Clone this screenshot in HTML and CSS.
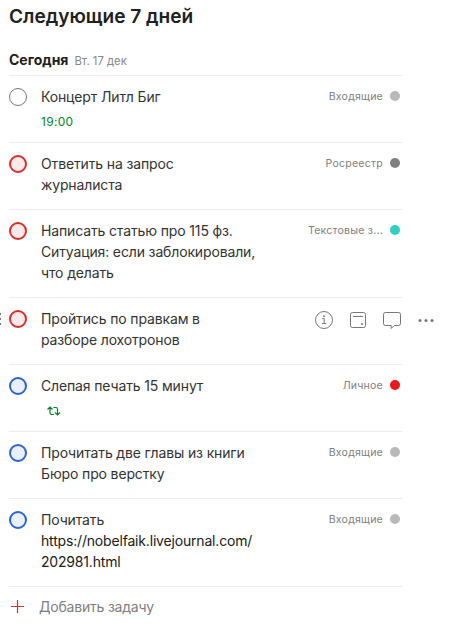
FILE: index.html
```html
<!DOCTYPE html>
<html lang="ru">
	<head>
		<meta charset="UTF-8">
		<title>Следующие 7 дней</title>
		<link rel="stylesheet" href="styles.css">
	</head>
	<body>
		<div class="agenda">
			<h1>Следующие 7 дней</h1>
			<div class="day">
				<h2>Сегодня</h2>
				<span class="date">Вт. 17 дек</span>
			</div>
			<ul class="tasks">
				<li>
					<span class="check"></span>
					<div class="text">
						<p>Концерт Литл Биг</p>
						<div class="time">19:00</div>
					</div>
					<div class="project">Входящие<i class="dot"></i></div>
				</li>
				<li>
					<span class="check red"></span>
					<div class="text">
						<p>Ответить на запрос<br>журналиста</p>
					</div>
					<div class="project">Росреестр<i class="dot dark"></i></div>
				</li>
				<li>
					<span class="check red"></span>
					<div class="text">
						<p>Написать статью про 115 фз.<br>Ситуация: если заблокировали,<br>что делать</p>
					</div>
					<div class="project">Текстовые з...<i class="dot teal"></i></div>
				</li>
				<li class="hovered">
					<svg class="drag" width="3" height="14" viewBox="0 0 3 14">
						<path d="M0 2h2M0 7h2M0 12h2" stroke="#777" stroke-width="2"/>
					</svg>
					<span class="check red"></span>
					<div class="text">
						<p>Пройтись по правкам в<br>разборе лохотронов</p>
					</div>
					<div class="actions">
						<svg width="18" height="18" viewBox="0 0 18 18">
							<circle cx="9" cy="9" r="8.5"/>
							<path d="M7.2 7.5h2v5M7 12.5h4.3"/>
							<circle class="fill" cx="9" cy="5.2" r=".9"/>
						</svg>
						<svg width="16" height="18" viewBox="0 0 16 18">
							<rect x=".5" y="1.5" width="15" height="15" rx="2"/>
							<path d="M3 5.5h10"/>
							<circle class="fill" cx="12" cy="13" r="1"/>
						</svg>
						<svg width="18" height="18" viewBox="0 0 18 18">
							<path d="M2.5 1.5h13a2 2 0 0 1 2 2v9a2 2 0 0 1-2 2h-4.300l-3 3v-3H2.500a2 2 0 0 1-2-2v-9a2 2 0 0 1 2-2z"/>
						</svg>
						<svg width="16" height="18" viewBox="0 0 16 18">
							<circle class="fill" cx="2" cy="9.500" r="1.500"/>
							<circle class="fill" cx="8" cy="9.500" r="1.500"/>
							<circle class="fill" cx="14" cy="9.500" r="1.500"/>
						</svg>
					</div>
				</li>
				<li>
					<span class="check blue"></span>
					<div class="text">
						<p>Слепая печать 15 минут</p>
						<svg class="repeat" width="14" height="10" viewBox="0 0 14 10">
							<path d="M.5 3.500L3 1l2.500 2.500M3 1.500v5.500a1.500 1.500 0 0 0 1.500 1.500H7M6.500 1.500h2.500A1.500 1.500 0 0 1 10.500 3v5.500M8 6.500L10.500 9l2.500-2.500"/>
						</svg>
					</div>
					<div class="project">Личное<i class="dot bright"></i></div>
				</li>
				<li>
					<span class="check blue"></span>
					<div class="text">
						<p>Прочитать две главы из книги<br>Бюро про верстку</p>
					</div>
					<div class="project">Входящие<i class="dot"></i></div>
				</li>
				<li>
					<span class="check blue"></span>
					<div class="text">
						<p>Почитать<br><a>https://nobelfaik.livejournal.com/<br>202981.html</a></p>
					</div>
					<div class="project">Входящие<i class="dot"></i></div>
				</li>
			</ul>
			<div class="add">
				<svg width="13" height="13" viewBox="0 0 13 13">
					<path d="M6.500 0v13M0 6.500h13" stroke="#c0392b" stroke-width="1.2"/>
				</svg>
				<span>Добавить задачу</span>
			</div>
		</div>
	</body>
</html>
```
FILE: styles.css
```css
*{
	padding: 0;
	margin: 0;
	box-sizing: border-box;
}
body{
	background-color: #fff;
	color: #333;
	font-family: Inter, "Liberation Sans", sans-serif;
	font-size: 14px;
	line-height: 21px;
}
li{
	list-style: none;
}
svg{
	display: block;
	fill: none;
}
.agenda{
	width: 393px;
	margin-left: 9px;
	padding-top: 4px;
}
h1{
	font-size: 19.1px;
	line-height: 24px;
	font-weight: 600;
	color: #202020;
}
.day{
	display: flex;
	align-items: baseline;
	gap: 6px;
	height: 26px;
	margin-top: 21px;
	white-space: nowrap;
}
h2{
	font-size: 14px;
	font-weight: 700;
	color: #202020;
}
.date{
	font-size: 11.3px;
	color: #888;
}
.tasks>li{
	position: relative;
	display: flex;
	align-items: flex-start;
	min-height: 67px;
	padding: 10px 0 9px;
	border-top: 1px solid #ececec;
}
.tasks>li:last-child{
	border-bottom: 1px solid #ececec;
}
.check{
	width: 18px;
	height: 18px;
	margin: 2px 14px 0 0;
	border: 1px solid #777;
	border-radius: 50%;
}
.check.red{
	border: 2px solid #d8302b;
	background-color: #fce9ea;
}
.check.blue{
	border: 2px solid #2c64d2;
	background-color: #e9effb;
}
.text{
	flex: 1;
	white-space: nowrap;
	letter-spacing: -.14px;
}
.text>p:only-child{
	padding-bottom: 5px;
}
.text a{
	letter-spacing: -.18px;
	color: #202020;
}
.time{
	margin-top: 4px;
	font-size: 12px;
	letter-spacing: .3px;
	color: #058527;
}
.repeat{
	margin: 10px 0 0 6px;
	stroke: #058527;
	stroke-width: 1.2;
}
.project{
	display: flex;
	align-items: center;
	gap: 7px;
	height: 20px;
	padding-right: 2px;
	font-size: 10.6px;
	letter-spacing: .2px;
	color: #808080;
	white-space: nowrap;
}
.dot{
	width: 10px;
	height: 10px;
	border-radius: 50%;
	background-color: #b8b8b8;
}
.dot.dark{
	background-color: #808080;
}
.dot.teal{
	background-color: #30d0be;
}
.dot.bright{
	background-color: #ed1717;
}
/* иконки при наведении на задачу */
.drag{
	position: absolute;
	left: -10px;
	top: 14px;
}
.actions{
	display: flex;
	gap: 17px;
	margin: 3px -32px 0 0;
	stroke: #777;
}
.actions .fill{
	fill: #777;
	stroke: none;
}
.add{
	display: flex;
	align-items: center;
	gap: 15px;
	height: 39px;
	padding-left: 2px;
	letter-spacing: -.2px;
	color: #808080;
}
```
